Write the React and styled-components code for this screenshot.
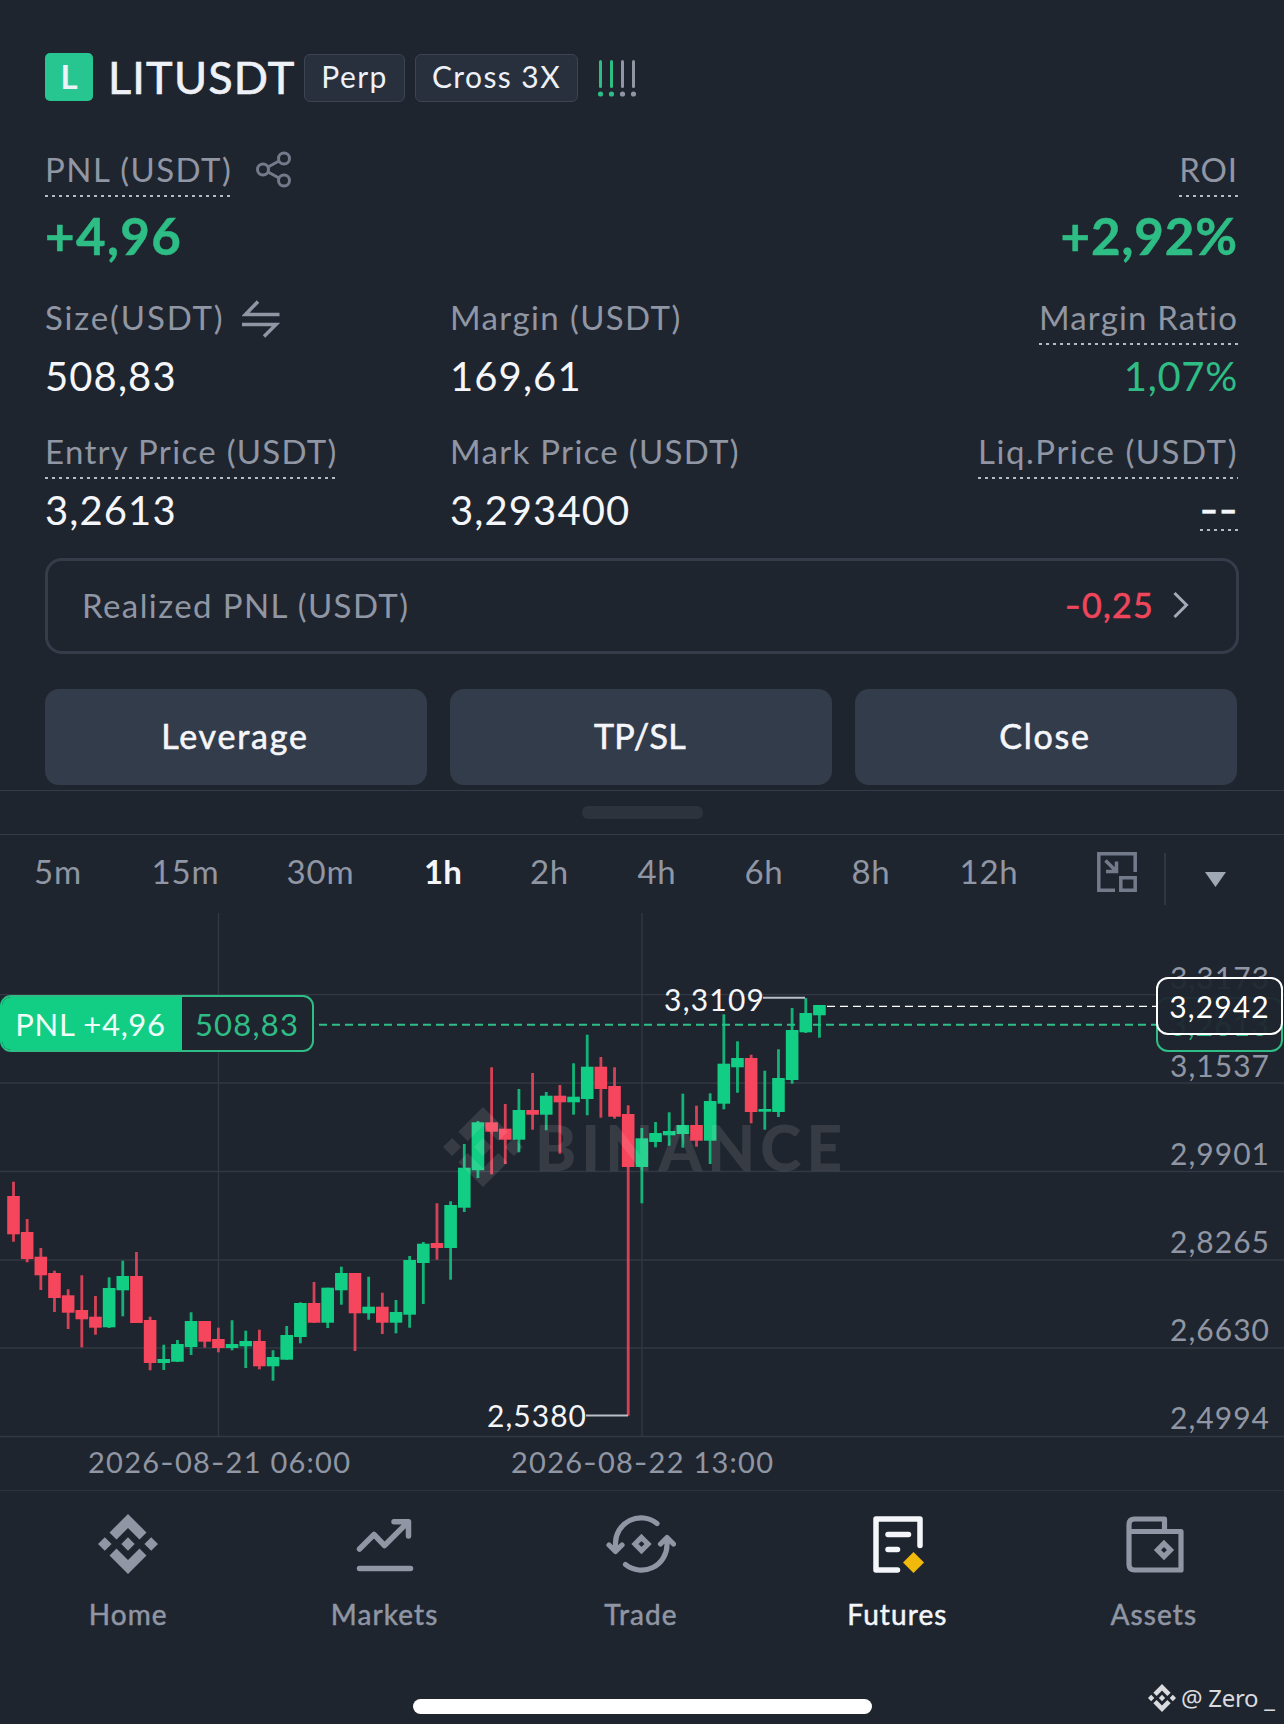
import { Fragment } from "react";
import styled, { createGlobalStyle } from "styled-components";

const GlobalStyle = createGlobalStyle`
  body {
    margin: 0;
    background-color: #1f252f;
  }
`;

const Screen = styled.div`
  width: 1284px;
  height: 1724px;
  box-sizing: border-box;
  display: flex;
  flex-direction: column;
  overflow: hidden;
  background-color: #1f252f;
  color: #eef1f7;
  font-family: Lato, "Liberation Sans", sans-serif;
`;

const Position = styled.section`
  display: flex;
  flex-direction: column;
  height: 790px;
  box-sizing: border-box;
  padding: 53px 46px 0 45px;
`;

const Header = styled.header`
  display: flex;
  align-items: center;
  height: 48px;
`;

const CoinLogo = styled.div`
  width: 48px;
  height: 48px;
  border-radius: 5px;
  background-color: #27c690;
  font-size: 33px;
  font-weight: 700;
  line-height: 47px;
  text-align: center;
`;

const Pair = styled.h1`
  margin: 0 7px 0 15px;
  width: 189px;
  font-size: 45px;
  font-weight: 400;
  line-height: 47px;
  letter-spacing: 1.2px;
  -webkit-text-stroke: 0.7px currentColor;
`;

const Tag = styled.span`
  box-sizing: border-box;
  width: ${(props) => props.$width}px;
  height: 48px;
  margin: 2px 10px 0 0;
  border: 1px solid #3d4553;
  border-radius: 6px;
  background-color: #29303d;
  font-size: 30px;
  line-height: 43px;
  letter-spacing: 1.4px;
  text-align: center;
`;

const StrengthIcon = styled.svg`
  margin: 1px 0 0 10px;
`;

const Row = styled.div`
  display: grid;
  grid-template-columns: repeat(3, 382px);
  column-gap: 23px;
  margin-top: ${(props) => props.$top}px;
`;

const Cell = styled.div`
  display: flex;
  flex-direction: column;
  align-items: ${(props) => (props.$right ? "flex-end" : "flex-start")};
  margin-right: ${(props) => (props.$right ? -1 : 0)}px;
`;

const LabelLine = styled.div`
  display: flex;
  align-items: flex-start;
  gap: ${(props) => props.$gap || 0}px;
`;

const Label = styled.span`
  height: ${(props) => (props.$tall ? 49 : 48)}px;
  color: #9096a3;
  font-size: 33px;
  line-height: ${(props) => (props.$tall ? 40 : 38)}px;
  letter-spacing: ${(props) => props.$spacing || 1.35}px;
  white-space: nowrap;
  ${(props) =>
    props.$dotted &&
    `background: repeating-linear-gradient(90deg, #b4bac6 0 3px, transparent 3px 7px)
      left bottom 1px / 100% 2px no-repeat;`}
`;

const PnlValue = styled.strong`
  margin-top: 10px;
  height: 55px;
  color: #2ebd85;
  font-size: 51px;
  font-weight: 700;
  line-height: 56px;
  letter-spacing: ${(props) => props.$spacing || 1.4}px;
  -webkit-text-stroke: 0.5px currentColor;
`;

const Value = styled.span`
  margin-top: 5px;
  height: 48px;
  color: ${(props) => props.$color || "#f4f6fa"};
  font-size: 40px;
  line-height: 50px;
  letter-spacing: ${(props) => props.$spacing || 1.1}px;
`;

const EmptyValue = styled(Value)`
  background: repeating-linear-gradient(90deg, #b4bac6 0 3px, transparent 3px 7px) left bottom 2px /
    100% 2px no-repeat;
  font-family: Inter, sans-serif;
  letter-spacing: 0.7px;
  -webkit-text-stroke: 0.5px currentColor;
`;

// Inter draws the wider minus used next to figures
const Minus = styled.span`
  font-family: Inter, sans-serif;
`;

const Realized = styled.div`
  display: flex;
  align-items: center;
  box-sizing: border-box;
  width: 1194px;
  height: 96px;
  margin-top: 25px;
  padding: 0 47px 2px 34px;
  border: 3px solid #363d4a;
  border-radius: 17px;
`;

const RealizedLabel = styled.span`
  flex: 1;
  color: #9096a3;
  font-size: 33px;
  line-height: 38px;
  letter-spacing: 1.4px;
`;

const RealizedValue = styled.span`
  margin-right: 19px;
  color: #f0465c;
  font-size: 34px;
  line-height: 40px;
  letter-spacing: 1.3px;
  -webkit-text-stroke: 0.6px currentColor;
`;

const Actions = styled.div`
  display: flex;
  gap: 23px;
  margin-top: 35px;
`;

const Action = styled.button`
  width: 382px;
  height: 96px;
  padding: 0 2px 3px 0;
  border: 0;
  border-radius: 14px;
  background-color: #333c4a;
  color: #f4f6fa;
  font-family: inherit;
  font-size: 34px;
  letter-spacing: ${(props) => props.$spacing || 1.8}px;
  -webkit-text-stroke: 0.6px currentColor;
`;

const DragBar = styled.div`
  display: flex;
  justify-content: center;
  height: 45px;
  padding-top: 15px;
  box-sizing: border-box;
  border-top: 1px solid #343c47;
  border-bottom: 1px solid #343c47;
`;

const DragHandle = styled.div`
  width: 121px;
  height: 13px;
  border-radius: 6px;
  background-color: #2d333d;
`;

const Intervals = styled.nav`
  display: flex;
  align-items: flex-start;
  height: 78px;
  padding: 17px 0 0 4px;
  box-sizing: border-box;
`;

const Interval = styled.span`
  width: ${(props) => props.$width}px;
  color: ${(props) => (props.$active ? "#f4f6fa" : "#9096a3")};
  font-size: 33px;
  font-weight: ${(props) => (props.$active ? 700 : 400)};
  line-height: 38px;
  letter-spacing: ${(props) => (props.$active ? 0 : 0.8)}px;
  text-align: center;
`;

const PipIcon = styled.svg`
  margin-left: 52px;
`;

const Divider = styled.div`
  width: 2px;
  height: 52px;
  margin: 1px 39px 0 27px;
  background-color: #2f3743;
`;

const Caret = styled.svg`
  margin-top: 20px;
`;

const Chart = styled.div`
  position: relative;
  height: 577px;
`;

const ChartSvg = styled.svg`
  display: block;
`;

const Watermark = styled.div`
  position: absolute;
  left: 443px;
  top: 194px;
  display: flex;
  align-items: center;
  color: #fff;
  opacity: 0.1;
  font-size: 62px;
  font-weight: 900;
  line-height: 80px;
  letter-spacing: 5.2px;
`;

const WatermarkLogo = styled.svg`
  margin-right: 12px;
`;

const PositionTag = styled.div`
  position: absolute;
  left: 0;
  top: 82px;
  display: flex;
  box-sizing: border-box;
  width: 314px;
  height: 57px;
  border: 2px solid #2ebd85;
  border-left-color: #12cd84;
  border-radius: 11px;
  background-color: #1f252f;
  overflow: hidden;
  font-size: 31px;
  line-height: 54px;
  text-align: center;
`;

const PositionPnl = styled.span`
  width: 180px;
  background-color: #12cd84;
  color: #eefff8;
  letter-spacing: 0.7px;
  text-indent: -3px;
`;

const PositionSize = styled.span`
  flex: 1;
  color: #2ebd85;
  letter-spacing: 1.2px;
`;

const PriceTag = styled.div`
  position: absolute;
  left: 1156px;
  top: ${(props) => props.$top}px;
  box-sizing: border-box;
  width: 127px;
  height: ${(props) => props.$height}px;
  border: 2px solid ${(props) => props.$color};
  border-radius: 12px;
  background-color: rgba(31, 37, 47, 0.94);
  color: ${(props) => props.$color};
  font-size: 30px;
  line-height: ${(props) => props.$height - 4}px;
  letter-spacing: 1.1px;
  text-align: center;
`;

const TabBar = styled.nav`
  display: grid;
  grid-template-columns: repeat(5, 1fr);
  height: 167px;
  padding: 23px 2px 0 0;
  box-sizing: border-box;
  border-top: 1px solid #2c333e;
`;

const Tab = styled.a`
  display: flex;
  flex-direction: column;
  align-items: center;
  gap: 20px;
  color: ${(props) => (props.$active ? "#f4f6fa" : "#9096a3")};
  font-size: 28px;
  line-height: 40px;
  letter-spacing: 1.1px;
  -webkit-text-stroke: 0.5px currentColor;
`;

const Footer = styled.footer`
  position: relative;
  display: flex;
  justify-content: center;
  padding-top: 42px;
`;

const HomeIndicator = styled.div`
  width: 459px;
  height: 15px;
  border-radius: 8px;
  background-color: #fff;
`;

const Author = styled.div`
  position: absolute;
  left: 1148px;
  top: 23px;
  display: flex;
  align-items: center;
  gap: 5px;
  color: #d9dbde;
  font-family: "Noto Sans", sans-serif;
  font-size: 24px;
  line-height: 36px;
  letter-spacing: -0.3px;
  white-space: nowrap;
`;

const UP = "#12cd84";
const DOWN = "#f6465d";

// [high, body top, body bottom, low, up], y inside the chart area
const candles = [
  [268.7, 283, 321.3, 328.7, 0],
  [306, 319, 346, 349.3, 0],
  [335, 343.7, 362.3, 377, 0],
  [357.7, 360, 385, 399, 0],
  [376.3, 382.3, 399.7, 416, 0],
  [362.3, 397, 406.3, 434.3, 0],
  [383, 403.7, 414.7, 421.7, 0],
  [364.3, 375, 414.3, 415, 1],
  [347.7, 363, 377.3, 403.3, 1],
  [339, 363, 410, 410, 0],
  [403.7, 407, 450, 457.3, 0],
  [431.7, 446, 450, 457, 1],
  [427, 431, 448.7, 449, 1],
  [399.3, 408, 434, 442, 1],
  [408, 408, 428.7, 434.7, 0],
  [414.7, 426, 435, 439.3, 0],
  [407.3, 431, 435, 437.3, 1],
  [417.7, 428, 433.3, 455, 1],
  [416.7, 428, 453.3, 456.3, 0],
  [437.3, 444, 453.3, 467.7, 1],
  [413, 422, 446.7, 446.7, 1],
  [389.3, 390, 424, 430.3, 1],
  [369, 390, 409.7, 410, 0],
  [374.7, 374.7, 409.7, 415, 1],
  [353.7, 360, 377.3, 391.7, 1],
  [360, 360, 400.3, 438, 0],
  [363.7, 393.7, 400.3, 406.7, 1],
  [379.7, 393.7, 409.7, 421, 0],
  [387, 399, 409.7, 420.3, 1],
  [343, 347, 401.7, 414.7, 1],
  [329, 330.7, 350, 391, 1],
  [290.3, 330, 335, 346.7, 0],
  [288.3, 292, 335, 366.7, 1],
  [231, 254.7, 294.7, 299, 1],
  [208, 209.3, 257.3, 265, 1],
  [154.3, 209.3, 218.7, 261.3, 0],
  [191, 215.7, 226.7, 251, 0],
  [176, 197, 226.7, 239.3, 1],
  [160, 197, 201.7, 216.7, 0],
  [179, 182.7, 201.7, 217.3, 1],
  [172, 182.7, 189.3, 240.7, 0],
  [150.3, 183.7, 189.3, 201.7, 1],
  [121.7, 153.7, 186, 202.3, 1],
  [144, 153.7, 176, 204.7, 0],
  [154.3, 173, 203.7, 205.7, 0],
  [192.3, 201, 254, 502.7, 0],
  [215, 225.3, 254, 290.3, 1],
  [209, 220, 229, 234.3, 1],
  [199.3, 218, 222.3, 232.7, 1],
  [180.7, 212, 221, 234.7, 1],
  [192.7, 212, 227.7, 233.7, 0],
  [180.3, 188, 227.7, 251, 1],
  [101.3, 150.7, 190.7, 196.3, 1],
  [128.3, 145, 154.3, 179.7, 1],
  [141.7, 145, 199, 210.3, 0],
  [157.7, 196, 198.7, 216.7, 1],
  [136.3, 165, 199, 204, 1],
  [95, 117, 167, 170.7, 1],
  [85, 100, 119.3, 120, 1],
  [92, 92, 102.3, 124.7, 1],
];

const gridRows = [81.7, 170, 258.5, 347, 435, 523.5];
const scale = ["3,3173", "3,1537", "2,9901", "2,8265", "2,6630", "2,4994"];

const intervals = [
  ["5m", 108],
  ["15m", 147],
  ["30m", 123],
  ["1h", 122],
  ["2h", 91],
  ["4h", 124],
  ["6h", 90],
  ["8h", 124],
  ["12h", 112],
];

function Diamond({ size, Svg = "svg" }) {
  return (
    <Svg width={size} height={size} viewBox="0 0 60 60" fill="currentColor">
      <path d="M30 0 48.5 18.5 41.5 25.5 30 14 18.5 25.5 11.5 18.5z" />
      <path d="M30 60 48.5 41.5 41.5 34.5 30 46 18.5 34.5 11.5 41.5z" />
      <path d="M30 23.3 36.7 30 30 36.7 23.3 30z" />
      <path d="M6.8 23.2 13.6 30 6.8 36.8 0 30zM53.2 23.2 60 30 53.2 36.8 46.4 30z" />
    </Svg>
  );
}

const stroke = {
  fill: "none",
  stroke: "currentColor",
  strokeWidth: 5.5,
  strokeLinecap: "round",
  strokeLinejoin: "round",
};

function MarketsIcon() {
  return (
    <svg width="60" height="60" viewBox="0 0 60 60" {...stroke}>
      <path d="M4.5 35 19 20.5 29.5 31.5 52 9M39 7.8H53.5V22M4.5 54.5H55.5" />
    </svg>
  );
}

function TradeIcon() {
  return (
    <svg width="70" height="60" viewBox="0 0 70 60" {...stroke} strokeWidth="5.2">
      <path d="M51 9.5A25.5 25.5 0 0 0 9.500 30V36M3 31 9.500 37.500 16 31" />
      <path d="M19.500 50.500A25.500 25.500 0 0 0 61 30V24M54.500 30 61 23.500 67.500 30" />
      <path d="M35.500 23.500 42 30 35.500 36.500 29 30z" strokeLinejoin="miter" />
    </svg>
  );
}

function FuturesIcon() {
  return (
    <svg width="60" height="60" viewBox="0 0 60 60" {...stroke}>
      <path d="M53 31.5V5H9V56H30.5M21 20.6H41.5M21 35.5H30.5" />
      <path d="M46.5 38 57 48.5 46.5 59 36 48.5z" fill="#f0b90b" stroke="none" />
    </svg>
  );
}

function AssetsIcon() {
  return (
    <svg width="60" height="60" viewBox="0 0 60 60" {...stroke} strokeWidth="5.2">
      <path d="M5 17.5H57V56H10.5Q5 56 5 50.5V10.5Q5 5 10.5 5H40.5V17" />
      <path d="M40 29.5 46.5 36 40 42.5 33.5 36z" strokeLinejoin="miter" />
    </svg>
  );
}

const tabs = [
  ["Home", <Diamond size={60} />],
  ["Markets", <MarketsIcon />],
  ["Trade", <TradeIcon />],
  ["Futures", <FuturesIcon />],
  ["Assets", <AssetsIcon />],
];

function DateLabel({ x, value }) {
  return (
    <text x={x} y="560" fontSize="29" textLength="262">
      {value.split("-").map((part, i) => (
        <Fragment key={i}>
          {i > 0 && <tspan fontFamily="Inter, sans-serif">-</tspan>}
          {part}
        </Fragment>
      ))}
    </text>
  );
}

function CandleChart() {
  return (
    <ChartSvg
      width="1284"
      height="577"
      viewBox="0 0 1284 577"
      fontFamily="Lato, 'Liberation Sans', sans-serif"
      fontSize="30"
    >
      <g stroke="#323943" strokeWidth="1.3">
        {gridRows.map((y) => (
          <path key={y} d={`M0 ${y}H1284`} />
        ))}
        <path d="M218.5 0V523M642 0V523" />
      </g>
      <path d="M319 111.8H1156" stroke="#2ebd85" strokeWidth="2" strokeDasharray="8 5" />
      <path d="M827 93.3H1156" stroke="#fff" strokeWidth="1.3" strokeDasharray="8 5" />
      {candles.map(([high, top, bottom, low, up], i) => {
        const x = 13.5 + i * 13.66;
        return (
          <g key={i} fill={up ? UP : DOWN}>
            <rect x={x - 1.4} y={high} width="2.8" height={low - high} opacity="0.85" />
            <rect x={x - 6.3} y={top} width="12.6" height={bottom - top} />
          </g>
        );
      })}
      <path d="M763 84.7H805M586 502.5H628" stroke="#b9bec8" strokeWidth="2" />
      <g fill="#f4f6fa">
        <text x="664" y="97.5" textLength="100">
          3,3109
        </text>
        <text x="487" y="513.5" textLength="99">
          2,5380
        </text>
      </g>
      <g fill="#9096a3">
        {scale.map((price, i) => (
          <text key={price} x="1170" y={75.5 + i * 88} textLength="99">
            {price}
          </text>
        ))}
        <DateLabel x="88" value="2026-08-21 06:00" />
        <DateLabel x="511" value="2026-08-22 13:00" />
      </g>
    </ChartSvg>
  );
}

function App() {
  return (
    <Screen>
      <GlobalStyle />
      <Position>
        <Header>
          <CoinLogo>L</CoinLogo>
          <Pair>LITUSDT</Pair>
          <Tag $width={101}>Perp</Tag>
          <Tag $width={163}>Cross 3X</Tag>
          <StrengthIcon width="38" height="38" viewBox="0 0 38 38">
            {[0, 1, 2, 3].map((i) => (
              <Fragment key={i}>
                <rect x={1 + i * 11} y="1" width="3" height="28" rx="1.5" fill={i < 2 ? "#2ebd85" : "#9096a3"} />
                <circle cx={2.5 + i * 11} cy="35" r="2.6" fill={i < 2 ? "#2ebd85" : "#9096a3"} />
              </Fragment>
            ))}
          </StrengthIcon>
        </Header>

        <Row $top={48}>
          <Cell>
            <LabelLine $gap={24}>
              <Label $dotted $tall $spacing={1.45}>
                PNL (USDT)
              </Label>
              <svg width="36" height="40" viewBox="0 0 36 40" fill="none" stroke="#737b8a" strokeWidth="3">
                <circle cx="7" cy="20.5" r="5.5" />
                <circle cx="28" cy="9.5" r="5.5" />
                <circle cx="28" cy="31.5" r="5.5" />
                <path d="M12 18 23 12M12 23 23 29" />
              </svg>
            </LabelLine>
            <PnlValue>+4,96</PnlValue>
          </Cell>
          <Cell />
          <Cell $right>
            <Label $dotted $tall $spacing={0.9}>
              ROI
            </Label>
            <PnlValue $spacing={0.9}>+2,92%</PnlValue>
          </Cell>
        </Row>

        <Row $top={35}>
          <Cell>
            <LabelLine $gap={17}>
              <Label $spacing={1.85}>Size(USDT)</Label>
              <svg width="38" height="40" viewBox="0 0 38 40" fill="none" stroke="#9096a3" strokeWidth="3.5">
                <path d="M16 3.5 3.5 16.5H37.5M0 26.5H34L22 38.5" />
              </svg>
            </LabelLine>
            <Value>508,83</Value>
          </Cell>
          <Cell>
            <Label $spacing={1.4}>Margin (USDT)</Label>
            <Value>169,61</Value>
          </Cell>
          <Cell $right>
            <Label $dotted $spacing={1.15}>
              Margin Ratio
            </Label>
            <Value $color="#2ebd85" $spacing={0.7}>
              1,07%
            </Value>
          </Cell>
        </Row>

        <Row $top={33}>
          <Cell>
            <Label $dotted $spacing={1.3}>
              Entry Price (USDT)
            </Label>
            <Value>3,2613</Value>
          </Cell>
          <Cell>
            <Label $spacing={1.3}>Mark Price (USDT)</Label>
            <Value>3,293400</Value>
          </Cell>
          <Cell $right>
            <Label $dotted $spacing={1.55}>
              Liq.Price (USDT)
            </Label>
            <EmptyValue>--</EmptyValue>
          </Cell>
        </Row>

        <Realized>
          <RealizedLabel>Realized PNL (USDT)</RealizedLabel>
          <RealizedValue>
            <Minus>-</Minus>0,25
          </RealizedValue>
          <svg width="16" height="28" viewBox="0 0 16 28" fill="none" stroke="#a4abb8" strokeWidth="3">
            <path d="M1.5 2 13.5 14 1.5 26" />
          </svg>
        </Realized>

        <Actions>
          <Action>Leverage</Action>
          <Action $spacing={0.4}>TP/SL</Action>
          <Action>Close</Action>
        </Actions>
      </Position>

      <DragBar>
        <DragHandle />
      </DragBar>

      <Intervals>
        {intervals.map(([name, width]) => (
          <Interval key={name} $width={width} $active={name === "1h"}>
            {name}
          </Interval>
        ))}
        <PipIcon width="40" height="40" viewBox="0 0 40 40" fill="none" stroke="#737b8a" strokeWidth="3.5">
          <path d="M38.2 20V1.8H1.8V38.2H18" />
          <path d="M23.8 25.8H38.2V38.2H23.8z" />
          <path d="M8.5 8.5 19 19M19.5 9.5V19.5H9" />
        </PipIcon>
        <Divider />
        <Caret width="21" height="15" viewBox="0 0 21 15" fill="#a1a8b5">
          <path d="M0 0H21L10.5 15z" />
        </Caret>
      </Intervals>

      <Chart>
        <CandleChart />
        <Watermark>
          <Diamond size={80} Svg={WatermarkLogo} />
          BINANCE
        </Watermark>
        <PositionTag>
          <PositionPnl>PNL +4,96</PositionPnl>
          <PositionSize>508,83</PositionSize>
        </PositionTag>
        <PriceTag $top={84} $height={55} $color="#2ebd85">
          3,2613
        </PriceTag>
        <PriceTag $top={64} $height={58} $color="#fff">
          3,2942
        </PriceTag>
      </Chart>

      <TabBar>
        {tabs.map(([name, icon]) => (
          <Tab key={name} $active={name === "Futures"}>
            {icon}
            {name}
          </Tab>
        ))}
      </TabBar>

      <Footer>
        <HomeIndicator />
        <Author>
          <Diamond size={28} />
          <span>@ Zero _</span>
        </Author>
      </Footer>
    </Screen>
  );
}

export default App;
